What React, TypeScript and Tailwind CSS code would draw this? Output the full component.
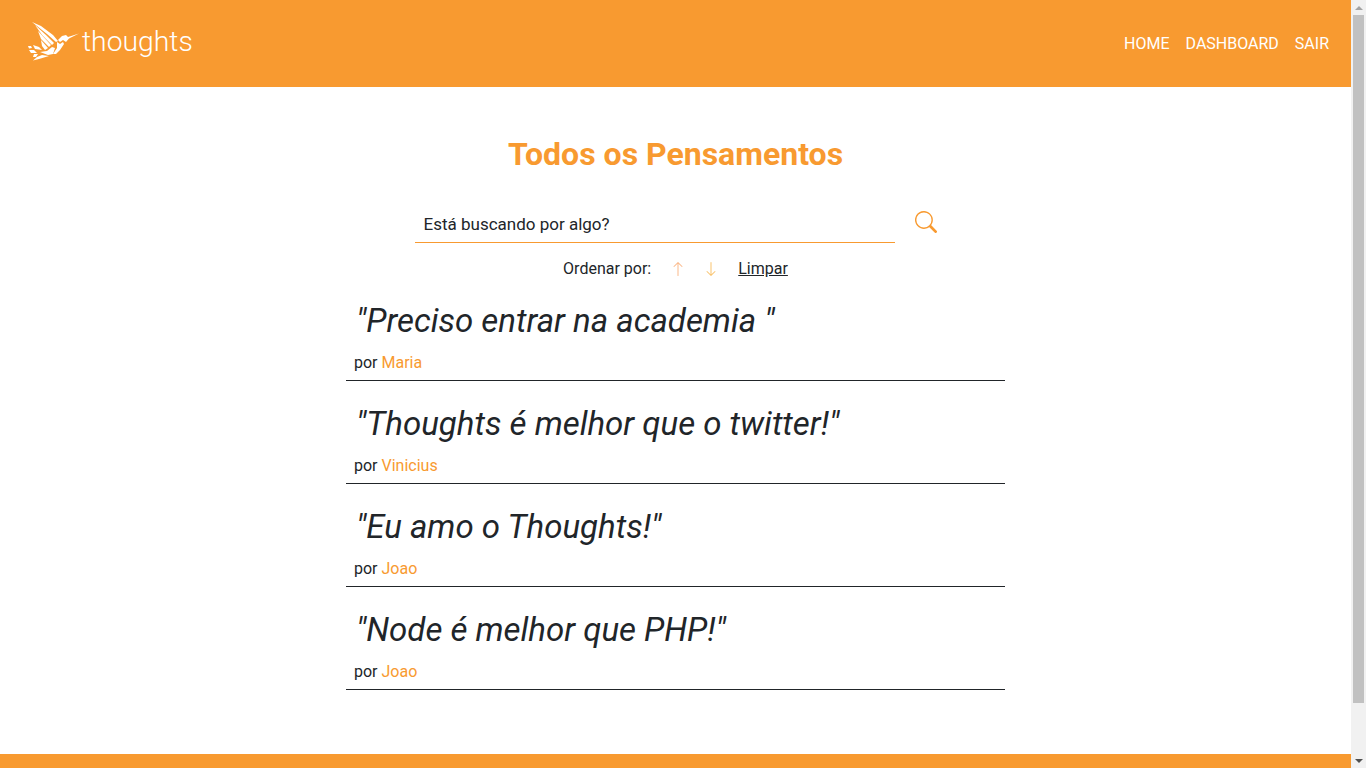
import { BsArrowDown, BsArrowUp, BsSearch } from 'react-icons/bs';

const thoughts = [
  { id: 1, title: 'Preciso entrar na academia ', author: 'Maria' },
  { id: 2, title: 'Thoughts é melhor que o twitter!', author: 'Vinicius' },
  { id: 3, title: 'Eu amo o Thoughts!', author: 'Joao' },
  { id: 4, title: 'Node é melhor que PHP!', author: 'Joao' },
];

function BirdLogo() {
  return (
    <svg viewBox="0 0 52 40" className="w-[52px] h-[40px] mb-[2px]" fill="#fff">
      {/* wing feathers */}
      <path d="M5 1 L14 5 L26 14 L31 20 L29 21 L20 13 Z" />
      <path d="M8 4 L19 14 L27 22 L25 24 L15 14 Z" />
      <path d="M11 10 L24 24 L22 26 L14 18 Z" />
      <path d="M14 19 L21 27 L18 29 L15 25 Z" />
      {/* head and body */}
      <path d="M31 19 L35 15 L39 14 L41 16 L52 12.500 L42 17.500 L39 21 L36 19 L33 21 Z" />
      <path d="M30 21 L33 23 L36 21 L37 23 L33 29 L29 33 L26 33 L30 27 Z" />
      <path d="M25 26 L28 27 L26 33 L21 34 L13 31 L20 30 Z" />
      {/* tail */}
      <path d="M15 34 L22 35 L12 38 L6 39.500 L10 36 Z" />
      <path d="M1 25 L4 25 L5 27 L2 27.500 Z" />
      <path d="M6 24 L12 26 L15 29 L8 28 Z" />
      <path d="M2 29 L7 29 L10 32 L4 32 Z" />
      <path d="M7 33 L11 33 L9 36 L6 36 Z" />
    </svg>
  );
}

export default function App() {
  return (
    <div className="h-screen flex overflow-hidden bg-white font-['Roboto',sans-serif] text-[#212529]">
      <div className="flex-1 flex flex-col min-w-0">
        {/* Navbar */}
        <nav className="h-[87px] shrink-0 bg-[#f89a30] flex items-center justify-between pl-[27px] pr-[22px]">
          <div className="flex items-center gap-[3px] mt-[-3px]">
            <BirdLogo />
            <span className="text-[28.300px] font-light text-white leading-none mt-[1px]">thoughts</span>
          </div>
          <ul className="flex items-center gap-4 text-white text-base uppercase">
            <li>Home</li>
            <li>Dashboard</li>
            <li>Sair</li>
          </ul>
        </nav>

        {/* Main Content */}
        <main className="flex-1 w-[659px] mx-auto">
          <h1 className="mt-[47px] text-[32px] leading-[40px] font-bold text-[#f89a30] text-center">Todos os Pensamentos</h1>

          <form className="mt-[34px] flex items-start justify-center gap-5">
            <div className="w-[480px] h-[35px] border-b border-[#f89a30] pl-[9px] text-[17px] leading-[33px]">Está buscando por algo?</div>
            <BsSearch className="w-[22px] h-[22px] mt-[3px] text-[#f89a30]" />
          </form>

          <div className="mt-[17px] h-[18px] flex items-center justify-center text-base leading-[18px]">
            <span>Ordenar por:</span>
            <BsArrowUp className="ml-[19px] w-4 h-4 text-[#fbb98a]" />
            <BsArrowDown className="ml-[17px] w-4 h-4 text-[#f9c46f]" />
            <span className="ml-[19px] underline">Limpar</span>
          </div>

          <div>
            {thoughts.map((t) => (
              <div key={t.id} className="h-[103px] border-b border-[#212529] flex flex-col">
                <p className="pl-[10px] pt-[22px] text-[33px] leading-[42px] italic whitespace-pre">"{t.title}"</p>
                <p className="pl-2 mt-[9px] text-base leading-[24px]">
                  por <span className="text-[#f89a30]">{t.author}</span>
                </p>
              </div>
            ))}
          </div>
        </main>

        {/* Footer */}
        <footer className="h-[14px] shrink-0 bg-[#f89a30]" />
      </div>

      {/* Scrollbar */}
      <div className="w-[15px] shrink-0 bg-[#f1f1f1] flex flex-col items-center">
        <div className="h-[15px] flex items-center justify-center">
          <svg viewBox="0 0 8 4" className="w-2 h-1"><path d="M4 0 L8 4 L0 4 Z" fill="#a3a3a3" /></svg>
        </div>
        <div className="w-[11px] h-[688px] bg-[#c1c1c1]" />
        <div className="flex-1 flex items-end">
          <div className="h-[15px] flex items-center justify-center">
            <svg viewBox="0 0 8 4" className="w-2 h-1"><path d="M0 0 L8 0 L4 4 Z" fill="#505050" /></svg>
          </div>
        </div>
      </div>
    </div>
  );
}
